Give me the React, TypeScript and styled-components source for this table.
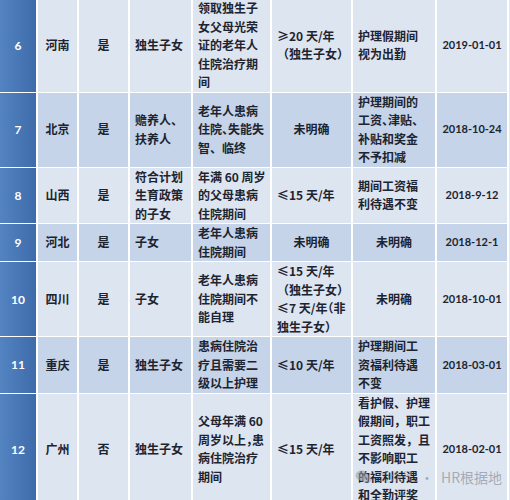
import React from "react";
import styled, { createGlobalStyle } from "styled-components";

const GlobalStyle = createGlobalStyle`
  html, body { margin: 0; padding: 0; background: #e4e9f0; }
  body { overflow: hidden; }
`;

const Page = styled.div`
  position: relative;
  width: 510px;
  height: 500px;
  overflow: hidden;
  background: #e4e9f0;
  font-family: "Noto Sans CJK SC", "Noto Sans", sans-serif;
`;

const Table = styled.div`
  display: flex;
  flex-direction: column;
  gap: 1px;
  width: 509px;
  background: #ffffff;
  margin-top: -1px;
`;

const Row = styled.div`
  display: grid;
  grid-template-columns: 36px 39px 49px 61px 77px 79px 82px 70px;
  column-gap: 2px;
  padding-right: 2px;
  background: #ffffff;
`;

const NumCell = styled.div`
  display: flex;
  align-items: center;
  justify-content: center;
  background: linear-gradient(to right, #5483c1, #3e6cab);
  color: #ffffff;
  font-family: "Lato", "Liberation Sans", sans-serif;
  font-weight: 700;
  font-size: 12px;
`;

const Cell = styled.div<{ $dark?: boolean; $align?: "left" | "center"; $date?: boolean }>`
  display: flex;
  flex-direction: column;
  justify-content: center;
  align-items: ${(p) => (p.$align === "center" ? "center" : "flex-start")};
  padding: 0 ${(p) => (p.$align === "center" ? "0" : "2px")} 0 ${(p) => (p.$align === "center" ? "0" : "5px")};
  background: ${(p) => (p.$dark ? "#c5d4e8" : "#dde5f0")};
  color: #1d2431;
  font-size: ${(p) => (p.$date ? "11px" : "12px")};
  font-family: ${(p) =>
    p.$date ? `"Lato", "Liberation Sans", sans-serif` : `"Noto Sans CJK SC", "Noto Sans", sans-serif`};
  font-weight: 700;
  line-height: 18.5px;
  white-space: nowrap;
  overflow: hidden;
`;

const Line = styled.span<{ $tight?: boolean }>`
  display: block;
  font-feature-settings: ${(p) => (p.$tight ? `"halt" 1` : "normal")};
`;

const Watermark = styled.div`
  position: absolute;
  left: 355px;
  top: 467px;
  display: flex;
  align-items: center;
  color: rgba(150, 156, 166, 0.8);
  font-family: "Noto Sans CJK SC", "Noto Sans", sans-serif;
  font-size: 14px;
  line-height: 20px;
  pointer-events: none;
`;

const WmIcon = styled.svg`
  margin-right: 6px;
`;

const WmSmall = styled.span`
  font-size: 12px;
  color: rgba(150, 156, 166, 0.45);
`;

const WmDot = styled.span`
  margin: 0 7px 0 6px;
`;

type LineData = string | { t: string; tight: true };

type RowData = {
  n: string;
  dark: boolean;
  cells: { lines: LineData[]; align?: "left" | "center"; date?: boolean }[];
};

const tight = (t: string): LineData => ({ t, tight: true });

const rows: RowData[] = [
  {
    n: "6",
    dark: false,
    cells: [
      { lines: ["河南"], align: "center" },
      { lines: ["是"], align: "center" },
      { lines: ["独生子女"] },
      { lines: ["领取独生子", "女父母光荣", "证的老年人", "住院治疗期", "间"] },
      { lines: ["≥20 天/年", "（独生子女）"] },
      { lines: ["护理假期间", "视为出勤"] },
      { lines: ["2019-01-01"], align: "center", date: true },
    ],
  },
  {
    n: "7",
    dark: true,
    cells: [
      { lines: ["北京"], align: "center" },
      { lines: ["是"], align: "center" },
      { lines: ["赡养人、", "扶养人"] },
      { lines: ["老年人患病", tight("住院、失能失"), "智、临终"] },
      { lines: ["未明确"], align: "center" },
      { lines: ["护理期间的", tight("工资、津贴、"), "补贴和奖金", "不予扣减"] },
      { lines: ["2018-10-24"], align: "center", date: true },
    ],
  },
  {
    n: "8",
    dark: false,
    cells: [
      { lines: ["山西"], align: "center" },
      { lines: ["是"], align: "center" },
      { lines: ["符合计划", "生育政策", "的子女"] },
      { lines: ["年满 60 周岁", "的父母患病", "住院期间"] },
      { lines: ["≤15 天/年"] },
      { lines: ["期间工资福", "利待遇不变"] },
      { lines: ["2018-9-12"], align: "center", date: true },
    ],
  },
  {
    n: "9",
    dark: true,
    cells: [
      { lines: ["河北"], align: "center" },
      { lines: ["是"], align: "center" },
      { lines: ["子女"] },
      { lines: ["老年人患病", "住院期间"] },
      { lines: ["未明确"], align: "center" },
      { lines: ["未明确"], align: "center" },
      { lines: ["2018-12-1"], align: "center", date: true },
    ],
  },
  {
    n: "10",
    dark: false,
    cells: [
      { lines: ["四川"], align: "center" },
      { lines: ["是"], align: "center" },
      { lines: ["子女"] },
      { lines: ["老年人患病", "住院期间不", "能自理"] },
      { lines: ["≤15 天/年", "（独生子女）", tight("≤7 天/年（非"), "独生子女）"] },
      { lines: ["未明确"], align: "center" },
      { lines: ["2018-10-01"], align: "center", date: true },
    ],
  },
  {
    n: "11",
    dark: true,
    cells: [
      { lines: ["重庆"], align: "center" },
      { lines: ["是"], align: "center" },
      { lines: ["独生子女"] },
      { lines: ["患病住院治", "疗且需要二", "级以上护理"] },
      { lines: ["≤10 天/年"] },
      { lines: ["护理期间工", "资福利待遇", "不变"] },
      { lines: ["2018-03-01"], align: "center", date: true },
    ],
  },
  {
    n: "12",
    dark: false,
    cells: [
      { lines: ["广州"], align: "center" },
      { lines: ["否"], align: "center" },
      { lines: ["独生子女"] },
      { lines: ["父母年满 60", tight("周岁以上，患"), "病住院治疗", "期间"] },
      { lines: ["≤15 天/年"] },
      { lines: ["看护假、护理", "假期间，职工", "工资照发，且", "不影响职工", "的福利待遇", "和全勤评奖"] },
      { lines: ["2018-02-01"], align: "center", date: true },
    ],
  },
];

export default function App() {
  return (
    <Page>
      <GlobalStyle />
      <Table>
        {rows.map((r) => (
          <Row key={r.n}>
            <NumCell>{r.n}</NumCell>
            {r.cells.map((c, i) => (
              <Cell key={i} $dark={r.dark} $align={c.align} $date={c.date}>
                {c.lines.map((l, j) =>
                  typeof l === "string" ? (
                    <Line key={j}>{l}</Line>
                  ) : (
                    <Line key={j} $tight>
                      {l.t}
                    </Line>
                  )
                )}
              </Cell>
            ))}
          </Row>
        ))}
      </Table>
      <Watermark>
        <WmIcon width="17" height="14" viewBox="0 0 17 14" aria-hidden="true">
          <ellipse cx="6.5" cy="5.5" rx="6" ry="5" fill="rgba(150,156,166,0.55)" />
          <ellipse cx="11.5" cy="9" rx="5.2" ry="4.3" fill="rgba(150,156,166,0.45)" />
        </WmIcon>
        <WmSmall>公众号</WmSmall>
        <WmDot>·</WmDot>
        <span>HR根据地</span>
      </Watermark>
    </Page>
  );
}
